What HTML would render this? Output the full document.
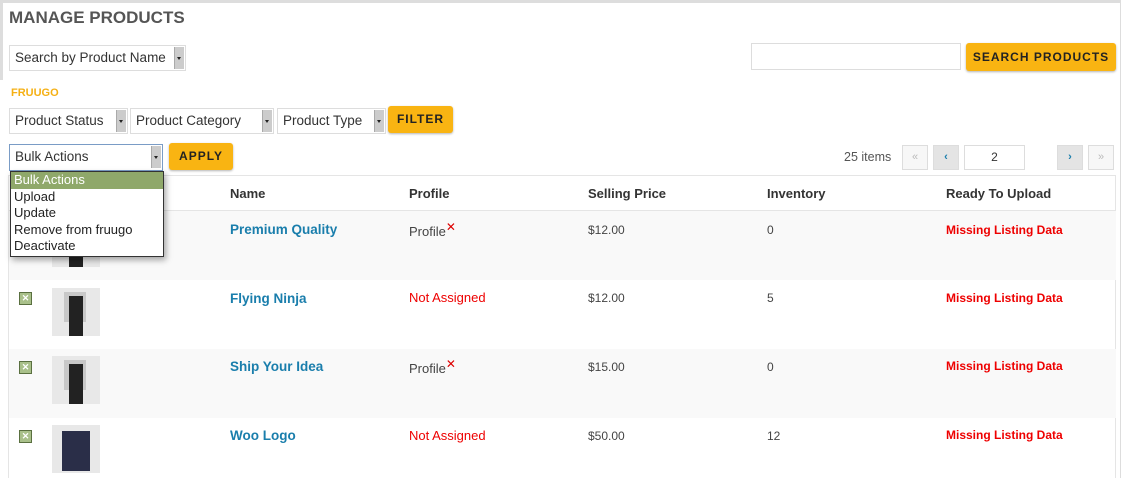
<!DOCTYPE html><html><head><style>
body{margin:0;width:1130px;height:478px;overflow:hidden;background:#fff;font-family:"Liberation Sans",sans-serif;position:relative;font-size:13px;color:#444}
.a{position:absolute}
.sel{position:absolute;border:1px solid #ddd;background:#fff;height:26px;box-sizing:border-box;font-size:13.5px;color:#333;line-height:24px;padding-left:5px}
.sel i{position:absolute;right:1px;top:1px;width:9px;height:22px;background:#ccc;border-left:1px solid #aaa}
.sel i:after{content:"";position:absolute;left:2px;top:10px;border:2.5px solid transparent;border-top:3px solid #222}
.btn{position:absolute;background:#f9b412;color:#222;font-weight:bold;font-size:12px;letter-spacing:1px;text-align:center;border-radius:3px;box-shadow:0 1px 2px rgba(0,0,0,.3)}
.pg{position:absolute;top:145px;width:26px;height:25px;border:1px solid #ddd;box-sizing:border-box;background:#f7f7f7;text-align:center;line-height:22px;font-size:11px;color:#bbb}
.th{position:absolute;top:186px;font-weight:bold;color:#333;font-size:13px}
.row{position:absolute;left:9px;width:1107px}
.nm{position:absolute;left:221px;color:#1a7eac;font-weight:bold;font-size:13.5px}
.pr{position:absolute;left:400px;font-size:13px}
.pc{position:absolute;left:579px;font-size:12px;color:#444}
.iv{position:absolute;left:758px;font-size:12px}
.rd{position:absolute;left:937px;color:#e00;font-weight:bold;font-size:12px}
.cb{position:absolute;left:10px;width:11px;height:11px;background:#a9c08a;border:1px solid #5a7040;color:#fff;font-size:9px;line-height:11px;text-align:center;font-weight:bold}
.im{position:absolute;left:43px;width:48px;height:48px;background:#e8e8e8;overflow:hidden}
.im b{position:absolute;left:17px;top:8px;width:14px;height:40px;background:#222}
.im s{position:absolute;left:12px;top:4px;width:22px;height:30px;background:#c8c8c8}
.x{color:#d00;font-size:12px;vertical-align:5px}
</style></head><body>
<div class="a" style="left:0;top:0;width:1130px;height:3px;background:#ddd"></div>
<div class="a" style="left:0;top:0;width:3px;height:80px;background:#ddd"></div>
<div class="a" style="left:1120px;top:0;width:10px;height:478px;background:#fff;border-left:1px solid #ddd"></div>
<div class="a" style="left:9px;top:8px;font-size:17px;font-weight:bold;color:#555">MANAGE PRODUCTS</div>
<div class="sel" style="left:9px;top:45px;width:177px">Search by Product Name<i></i></div>
<div class="a" style="left:751px;top:43px;width:210px;height:27px;border:1px solid #ddd;box-sizing:border-box"></div>
<div class="btn" style="left:966px;top:43px;width:150px;height:28px;line-height:28px">SEARCH PRODUCTS</div>
<div class="a" style="left:11px;top:87px;color:#f5b014;font-weight:bold;font-size:11px">FRUUGO</div>
<div class="sel" style="left:9px;top:108px;width:119px">Product Status<i></i></div>
<div class="sel" style="left:130px;top:108px;width:144px">Product Category<i></i></div>
<div class="sel" style="left:277px;top:108px;width:109px">Product Type<i></i></div>
<div class="btn" style="left:388px;top:106px;width:65px;height:27px;line-height:27px">FILTER</div>
<div class="sel" style="left:9px;top:144px;width:154px;height:27px;border-color:#7a9cc6">Bulk Actions<i></i></div>
<div class="btn" style="left:169px;top:143px;width:64px;height:27px;line-height:27px">APPLY</div>
<div class="a" style="left:844px;top:150px;font-size:12.5px;color:#555">25 items</div>
<div class="pg" style="left:902px">«</div>
<div class="pg" style="left:933px;background:#e4e4e4;color:#1a7eac;font-weight:bold">‹</div>
<div class="pg" style="left:964px;width:61px;background:#fff;color:#333;font-size:12px">2</div>
<div class="pg" style="left:1057px;background:#e4e4e4;color:#1a7eac;font-weight:bold">›</div>
<div class="pg" style="left:1088px">»</div>
<div class="a" style="left:8px;top:175px;width:1108px;height:303px;border:1px solid #e5e5e5;border-bottom:none;box-sizing:border-box"></div>
<div class="a" style="left:9px;top:210px;width:1107px;height:1px;background:#e5e5e5"></div>
<div class="th" style="left:230px">Name</div><div class="th" style="left:409px">Profile</div><div class="th" style="left:588px">Selling Price</div><div class="th" style="left:767px">Inventory</div><div class="th" style="left:946px">Ready To Upload</div>
<div class="row" style="top:211px;height:69px;background:#f9f9f9"><div class="im" style="top:8px"><s></s><b></b></div><div class="nm" style="top:11px">Premium Quality</div><div class="pr" style="top:9px">Profile<span class="x">✕</span></div><div class="pc" style="top:12px">$12.00</div><div class="iv" style="top:12px">0</div><div class="rd" style="top:12px">Missing Listing Data</div></div>
<div class="row" style="top:280px;height:69px"><div class="cb" style="top:12px">✕</div><div class="im" style="top:8px"><s></s><b></b></div><div class="nm" style="top:11px">Flying Ninja</div><div class="pr" style="top:10px;color:#e00">Not Assigned</div><div class="pc" style="top:11px">$12.00</div><div class="iv" style="top:11px">5</div><div class="rd" style="top:11px">Missing Listing Data</div></div>
<div class="row" style="top:349px;height:69px;background:#f9f9f9"><div class="cb" style="top:12px">✕</div><div class="im" style="top:7px"><s></s><b></b></div><div class="nm" style="top:10px">Ship Your Idea</div><div class="pr" style="top:8px">Profile<span class="x">✕</span></div><div class="pc" style="top:11px">$15.00</div><div class="iv" style="top:11px">0</div><div class="rd" style="top:10px">Missing Listing Data</div></div>
<div class="row" style="top:418px;height:60px"><div class="cb" style="top:12px">✕</div><div class="im" style="top:7px"><b style="left:10px;width:28px;top:6px;background:#2a2e48"></b></div><div class="nm" style="top:10px">Woo Logo</div><div class="pr" style="top:10px;color:#e00">Not Assigned</div><div class="pc" style="top:11px">$50.00</div><div class="iv" style="top:11px">12</div><div class="rd" style="top:10px">Missing Listing Data</div></div>
<div class="a" style="left:10px;top:171px;width:152px;height:84px;background:#fff;border:1px solid #333;box-shadow:2px 3px 6px rgba(0,0,0,.35);font-size:13px;color:#222;line-height:16.5px">
<div style="background:#8fa86a;color:#fff;padding-left:3px">Bulk Actions</div><div style="padding-left:3px">Upload</div><div style="padding-left:3px">Update</div><div style="padding-left:3px">Remove from fruugo</div><div style="padding-left:3px">Deactivate</div></div>
</body></html>
